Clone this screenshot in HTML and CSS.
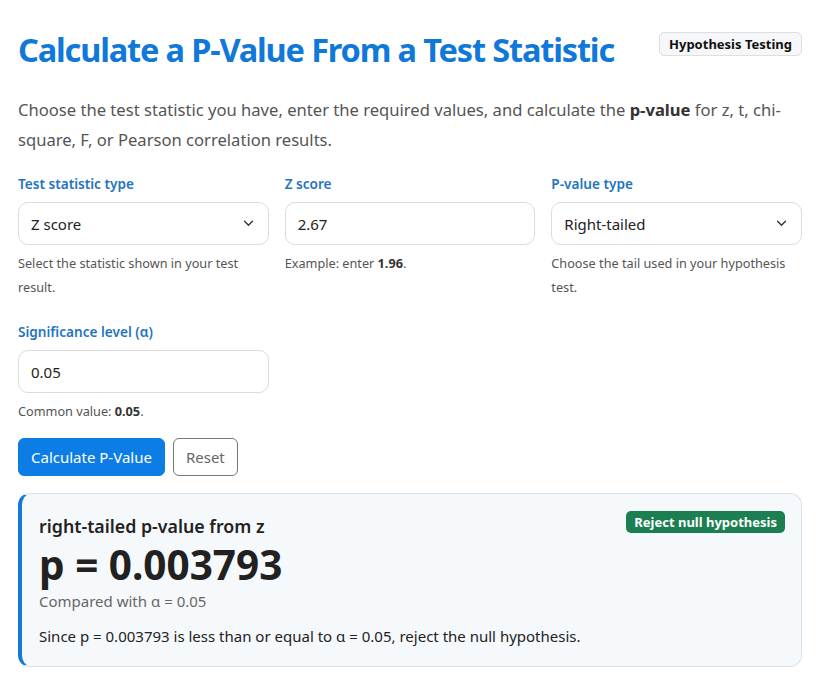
FILE: index.html
```html
<!DOCTYPE html>
<html>
<head>
<title>P-Value From a Test Statistic</title>
<meta charset="UTF-8">
<link rel="stylesheet" href="styles.css">
</head>
<body>
  <div class="page">
    <div class="header">
      <h1>Calculate a P-Value From a Test Statistic</h1>
      <span class="tag">Hypothesis Testing</span>
    </div>
    <p class="intro">Choose the test statistic you have, enter the required values, and calculate the <strong>p-value</strong> for z, t, chi-square, F, or Pearson correlation results.</p>

    <div class="fields">
      <div class="field">
        <label class="field-label">Test statistic type</label>
        <div class="select-wrap">
          <select class="control">
            <option>Z score</option>
            <option>T score</option>
            <option>Chi-square</option>
            <option>F statistic</option>
            <option>Pearson r</option>
          </select>
          <svg class="chevron" viewBox="0 0 12 8" width="12" height="8"><path d="M1.5 1.5 6 6l4.5-4.5" fill="none" stroke="#333" stroke-width="1.6" stroke-linecap="round" stroke-linejoin="round"/></svg>
        </div>
        <p class="help">Select the statistic shown in your test result.</p>
      </div>
      <div class="field">
        <label class="field-label">Z score</label>
        <input class="control" type="text" value="2.67">
        <p class="help">Example: enter <b>1.96</b>.</p>
      </div>
      <div class="field">
        <label class="field-label">P-value type</label>
        <div class="select-wrap">
          <select class="control">
            <option>Right-tailed</option>
            <option>Left-tailed</option>
            <option>Two-tailed</option>
          </select>
          <svg class="chevron" viewBox="0 0 12 8" width="12" height="8"><path d="M1.5 1.5 6 6l4.5-4.5" fill="none" stroke="#333" stroke-width="1.6" stroke-linecap="round" stroke-linejoin="round"/></svg>
        </div>
        <p class="help">Choose the tail used in your hypothesis test.</p>
      </div>
      <div class="field">
        <label class="field-label">Significance level (α)</label>
        <input class="control" type="text" value="0.05">
        <p class="help">Common value: <b>0.05</b>.</p>
      </div>
    </div>

    <div class="actions">
      <button class="btn btn-primary">Calculate P-Value</button>
      <button class="btn btn-outline">Reset</button>
    </div>

    <div class="result">
      <div class="result-top">
        <div class="result-title">right-tailed p-value from z</div>
        <span class="decision">Reject null hypothesis</span>
      </div>
      <div class="result-value">p = 0.003793</div>
      <div class="result-compare">Compared with α = 0.05</div>
      <p class="result-note">Since p = 0.003793 is less than or equal to α = 0.05, reject the null hypothesis.</p>
    </div>
  </div>
</body>
</html>
```

FILE: styles.css
```css
body {
  margin: 0;
  font-family: 'Noto Sans', 'Open Sans', sans-serif;
  color: #222;
  background: #fff;
}
.page {
  width: 784px;
  margin-left: 18px;
  padding-top: 29px;
}
.header {
  display: flex;
  justify-content: space-between;
  align-items: flex-start;
}
h1 {
  margin: 0;
  font-size: 32.5px;
  line-height: 42px;
  font-weight: 700;
  color: #0f78d9;
  letter-spacing: -1.15px;
}
.tag {
  margin-top: 3px;
  padding: 3px 9px;
  font-size: 13px;
  line-height: 16px;
  font-weight: 700;
  color: #111;
  background: #f6f7f8;
  border: 1px solid #dedede;
  border-radius: 5px;
}
.intro {
  margin: 24px 0 0;
  font-size: 16.6px;
  line-height: 30px;
  color: #555;
}
.intro strong {
  color: #333;
}

/* Campos do formulario */
.fields {
  display: grid;
  grid-template-columns: repeat(3, 1fr);
  column-gap: 16px;
  row-gap: 23px;
  margin-top: 19px;
}
.field-label {
  display: block;
  font-size: 13.6px;
  line-height: 20px;
  font-weight: 600;
  color: #1f74c2;
  margin-bottom: 8px;
}
.control {
  display: block;
  width: 100%;
  height: 43px;
  box-sizing: border-box;
  padding: 0 12px;
  font-family: inherit;
  font-size: 15px;
  color: #222;
  background: #fff;
  border: 1px solid #dcdcdc;
  border-radius: 10px;
  outline: none;
}
select.control {
  appearance: none;
  -webkit-appearance: none;
}
.select-wrap {
  position: relative;
}
.chevron {
  position: absolute;
  right: 15px;
  top: 18px;
  width: 11px;
  height: 7px;
  pointer-events: none;
}
.help {
  margin: 6px 0 0;
  font-size: 12.7px;
  line-height: 24px;
  color: #555;
}
.help b {
  color: #333;
}

/* Botoes */
.actions {
  display: flex;
  gap: 8px;
  margin-top: 15px;
}
.btn {
  height: 38px;
  padding: 0 12px;
  font-family: inherit;
  font-size: 15px;
  border-radius: 6px;
  cursor: pointer;
}
.btn-primary {
  background: #0d7de6;
  color: #fff;
  border: 1px solid #0d7de6;
}
.btn-outline {
  background: #fff;
  color: #666;
  border: 1px solid #777;
}

/* Resultado */
.result {
  margin-top: 17px;
  box-sizing: border-box;
  height: 174px;
  padding: 17px 16px 19px 17px;
  background: #f6f9fc;
  border: 1px solid #d9e2ea;
  border-left: 4px solid #1479d8;
  border-radius: 12px;
}
.result-top {
  display: flex;
  justify-content: space-between;
  align-items: flex-start;
}
.result-title {
  margin-top: 3px;
  font-size: 17.8px;
  line-height: 24px;
  font-weight: 600;
  color: #222;
}
.decision {
  padding: 3px 8px;
  font-size: 13px;
  line-height: 16px;
  font-weight: 700;
  color: #fff;
  background: #1b7f52;
  border-radius: 5px;
}
.result-value {
  margin-top: 4px;
  font-size: 40.5px;
  line-height: 46px;
  font-weight: 700;
  color: #212121;
}
.result-compare {
  margin-top: 2px;
  font-size: 15px;
  line-height: 22px;
  color: #666;
}
.result-note {
  margin: 13px 0 0;
  font-size: 15px;
  line-height: 22px;
  color: #222;
}
```
